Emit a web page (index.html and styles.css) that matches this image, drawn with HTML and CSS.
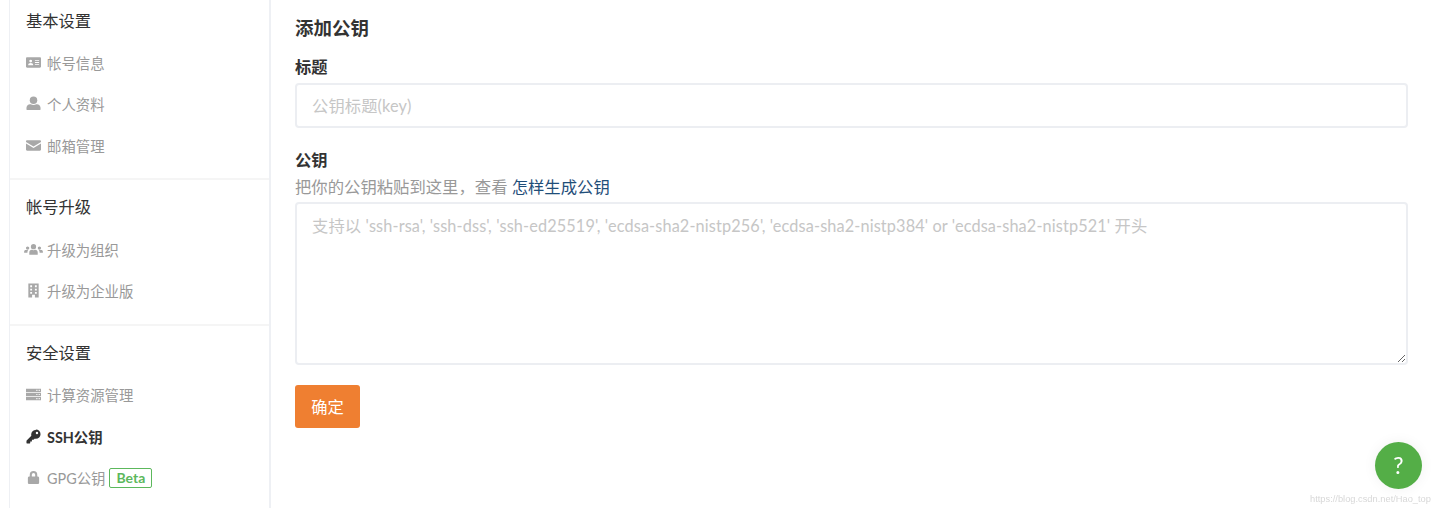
FILE: index.html
```html
<!DOCTYPE html>
<html lang="zh-CN">
<head>
<meta charset="UTF-8" />
<title>添加公钥</title>
<link rel="stylesheet" href="styles.css">
</head>
<body>

<div class="sidebar">
  <div class="group">
    <h3>基本设置</h3>
    <a class="item">
      <svg class="icon" viewBox="0 0 16 16"><path fill-rule="evenodd" d="M1.2 2.5h13.6c.7 0 1.2.5 1.2 1.2v8.6c0 .7-.5 1.2-1.2 1.2H1.2c-.7 0-1.2-.5-1.2-1.2V3.700c0-.7.5-1.200 1.200-1.200zM5 5a1.500 1.500 0 1 0 0 3 1.500 1.500 0 0 0 0-3zM2.300 10.800h5.400c0-1.400-1-2.300-2.700-2.300s-2.700.9-2.700 2.300zM9.500 5.500v1h4.500v-1zM9.500 7.500v1h4.500v-1zM9.500 9.500v1h4.500v-1z"/></svg>
      帐号信息
    </a>
    <a class="item">
      <svg class="icon" viewBox="0 0 16 16"><circle cx="8" cy="4.500" r="4"/><path d="M1.500 15c-.6 0-1-.4-1-1v-1.500c0-2.200 1.800-3.800 3.800-3.800h.7c.9.500 1.900.800 3 .800s2.100-.3 3-.8h.7c2 0 3.800 1.600 3.800 3.800V14c0 .6-.4 1-1 1z"/></svg>
      个人资料
    </a>
    <a class="item">
      <svg class="icon" viewBox="0 0 16 16"><path d="M1.200 2.500h13.600c.7 0 1.200.5 1.200 1.200v.5L8 9 0 4.200v-.5c0-.7.500-1.200 1.200-1.200z"/><path d="M0 5.800 8 10.600l8-4.800v6.500c0 .7-.5 1.200-1.200 1.200H1.200c-.7 0-1.200-.5-1.200-1.200z"/></svg>
      邮箱管理
    </a>
  </div>

  <div class="group">
    <h3>帐号升级</h3>
    <a class="item">
      <svg class="icon icon-wide" viewBox="0 0 20 16"><circle cx="10" cy="5" r="2.800"/><circle cx="3.700" cy="6.500" r="1.800"/><circle cx="16.300" cy="6.500" r="1.800"/><path d="M5.500 13.500v-2.300c0-2 1.200-2.900 2.600-2.900.6.300 1.200.5 1.900.5s1.300-.2 1.900-.5c1.400 0 2.600.9 2.600 2.900v2.300z"/><path d="M0 11.500V10.300c0-1 .7-1.700 1.700-1.700h2.600c-.5.600-.8 1.400-.8 2.500v.4zM20 11.500V10.300c0-1-.7-1.700-1.700-1.700h-2.600c.5.600.8 1.400.8 2.500v.4z"/></svg>
      升级为组织
    </a>
    <a class="item">
      <svg class="icon" viewBox="0 0 16 16"><path fill-rule="evenodd" d="M2.500 0.500h11v15H9.500v-3h-3v3H2.500zM4.500 2.500v2h2v-2zM9.500 2.500v2h2v-2zM4.500 6v2h2V6zM9.500 6v2h2V6zM4.500 9.500v2h2v-2zM9.500 9.500v2h2v-2z"/></svg>
      升级为企业版
    </a>
  </div>

  <div class="group">
    <h3>安全设置</h3>
    <a class="item">
      <svg class="icon" viewBox="0 0 16 16"><path fill-rule="evenodd" d="M0 1.800h16v3.600H0zM11 3v1.200h1.200V3zM13.500 3v1.200h1.200V3zM0 6.200h16v3.600H0zM11 7.400v1.200h1.200V7.400zM13.500 7.400v1.200h1.200V7.400zM0 10.600h16v3.600H0zM11 11.800V13h1.200v-1.200zM13.500 11.800V13h1.200v-1.200z"/></svg>
      计算资源管理
    </a>
    <a class="item active">
      <svg class="icon" viewBox="0 0 16 16"><path fill-rule="evenodd" d="M10.500 0.500a5 5 0 0 1 0 10c-.5 0-1-.1-1.400-.2L8 11.500H6.300v1.800H4.500v1.700c0 .3-.2.500-.5.500H1c-.3 0-.5-.2-.5-.5v-2.300c0-.2.100-.3.200-.4l5-5c-.1-.5-.2-.9-.2-1.300a5 5 0 0 1 5-5zM11.700 3a1.300 1.300 0 1 0 0 2.600 1.300 1.300 0 0 0 0-2.600z"/></svg>
      SSH公钥
    </a>
    <a class="item">
      <svg class="icon" viewBox="0 0 16 16"><path fill-rule="evenodd" d="M4 7V5a4 4 0 0 1 8 0v2h.5c.8 0 1.500.7 1.500 1.500v5c0 .8-.7 1.500-1.500 1.500h-9c-.8 0-1.500-.7-1.500-1.500v-5C2 7.700 2.700 7 3.500 7zM6.200 7h3.600V5a1.800 1.800 0 0 0-3.600 0z"/></svg>
      GPG公钥
      <span class="badge">Beta</span>
    </a>
  </div>
</div>

<div class="main-content">
  <h2>添加公钥</h2>
  <form>
    <div class="field">
      <label for="keyTitle">标题</label>
      <input type="text" id="keyTitle" placeholder="公钥标题(key)" />
    </div>
    <div class="field">
      <label for="keyContent">公钥</label>
      <p class="hint">把你的公钥粘贴到这里，查看 <a href="#">怎样生成公钥</a></p>
      <textarea id="keyContent" placeholder="支持以 'ssh-rsa', 'ssh-dss', 'ssh-ed25519', 'ecdsa-sha2-nistp256', 'ecdsa-sha2-nistp384' or 'ecdsa-sha2-nistp521' 开头"></textarea>
    </div>
    <button type="submit" class="submit-btn">确定</button>
  </form>
</div>

<div class="help-btn">?</div>
<div class="watermark">https://blog.csdn.net/Hao_top</div>

</body>
</html>
```

FILE: styles.css
```css
html, body {
  height: 100%;
}
body {
  font-family: Lato, "Noto Sans CJK SC", sans-serif;
  margin: 0;
  padding: 0 0 0 9px;
  display: flex;
  overflow: hidden;
  background: white;
  color: #333;
  box-sizing: border-box;
}
.sidebar {
  width: 262px;
  flex-shrink: 0;
  box-sizing: border-box;
  border-left: 1px solid #eef0f4;
  border-right: 2px solid #eef0f4;
}
.group {
  padding: 16px 0 12px;
  border-bottom: 2px solid #f5f5f5;
}
.group:first-child {
  padding: 10px 0 12.250px;
}
.group:last-child {
  border-bottom: none;
}
.group h3 {
  margin: 0 0 10.250px 16px;
  font-size: 16.300px;
  line-height: 22px;
  font-weight: 400;
  color: #333;
}
.group:first-child h3 {
  margin-bottom: 9.500px;
}
.item {
  display: flex;
  align-items: center;
  height: 41.500px;
  padding-left: 15.500px;
  font-size: 14.400px;
  color: #999;
}
.item.active {
  color: #333;
  font-weight: 700;
}
.icon {
  width: 15px;
  height: 15px;
  margin-right: 6.500px;
  fill: #a8a8a8;
  flex-shrink: 0;
}
.icon-wide {
  width: 19px;
  margin-left: -1.500px;
  margin-right: 4px;
}
.item.active .icon {
  fill: #333;
}
.badge {
  margin-left: 4px;
  padding: 0 6px;
  border: 1px solid #5cb85c;
  border-radius: 2px;
  color: #5cb85c;
  font-size: 14px;
  font-weight: 700;
  line-height: 18px;
}
.main-content {
  flex: 1;
  padding: 16px 26px 0 24px;
}
h2 {
  margin: 0 0 17px;
  font-size: 18.500px;
  line-height: 24px;
  font-weight: 700;
  color: #333;
}
.field {
  margin-bottom: 22px;
}
label {
  display: block;
  font-size: 16.300px;
  line-height: 20px;
  font-weight: 700;
  color: #333;
  margin-bottom: 6px;
}
.hint {
  margin: -1px 0 3px;
  font-size: 16.350px;
  line-height: 24px;
  color: #999;
}
.hint a {
  color: #1f4e79;
  text-decoration: none;
}
input, textarea {
  display: block;
  width: 100%;
  box-sizing: border-box;
  border: 2px solid #eceef2;
  border-radius: 4px;
  padding: 0 15px;
  font-family: inherit;
  font-size: 16.300px;
  letter-spacing: 0.12px;
  color: #333;
  outline: none;
}
input {
  height: 45px;
}
textarea {
  height: 163px;
  padding-top: 10px;
  line-height: 24px;
}
::placeholder {
  color: #c6c6c6;
}
.submit-btn {
  display: block;
  width: 65px;
  height: 43px;
  margin-top: -2px;
  padding: 0 0 2px;
  border: none;
  border-radius: 3px;
  background: #ef7f31;
  color: white;
  font-family: inherit;
  font-size: 16.300px;
  cursor: pointer;
}
/* floating, sits over the page */
.help-btn {
  position: fixed;
  left: 1375px;
  top: 442px;
  width: 47px;
  height: 47px;
  border-radius: 50%;
  background: #54ae47;
  color: white;
  font-size: 23px;
  line-height: 47px;
  text-align: center;
  box-shadow: 0 0 14px rgba(0, 0, 0, 0.06);
}
.watermark {
  position: fixed;
  left: 1310px;
  top: 491px;
  font-family: "Liberation Sans", sans-serif;
  font-size: 9.300px;
  line-height: 16px;
  color: #d8d8d8;
  white-space: nowrap;
}
```
